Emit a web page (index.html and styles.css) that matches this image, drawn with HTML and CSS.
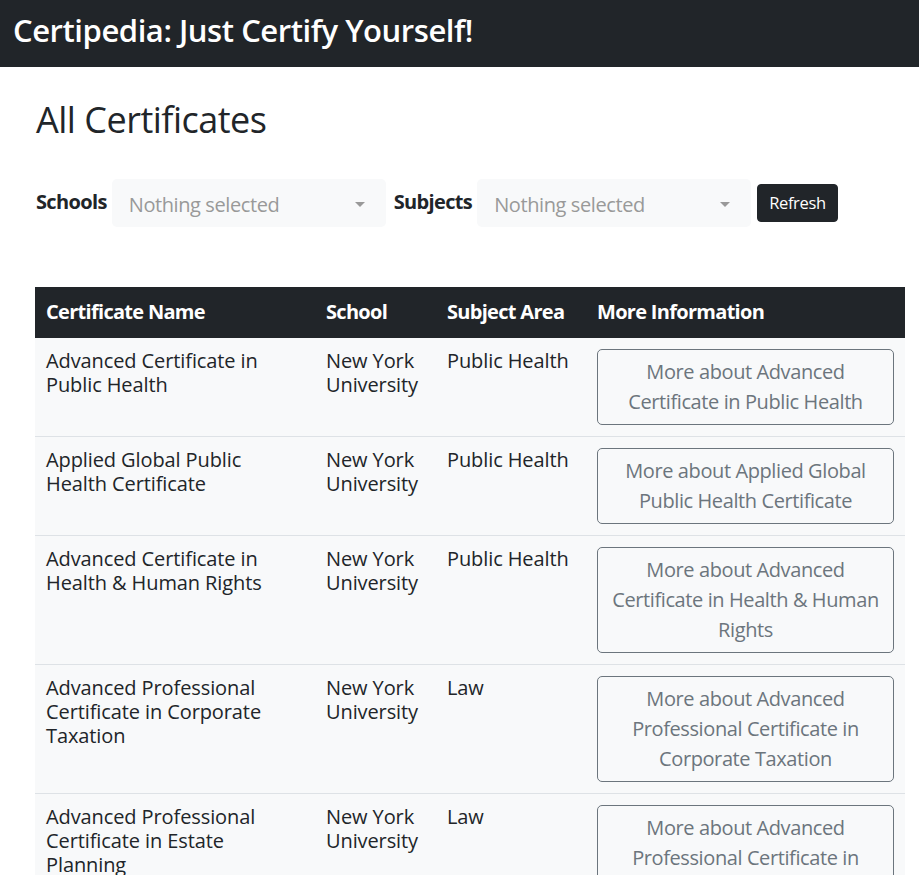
FILE: index.html
```html
<!DOCTYPE html>
<html lang="en">
<head>
<meta charset="utf-8">
<title>Certipedia</title>
<link rel="stylesheet" href="styles.css">
</head>
<body>
<header class="navbar">
  <div class="brand">Certipedia: Just Certify Yourself!</div>
</header>
<main class="page">
  <h1 class="title">All Certificates</h1>
  <div class="filters">
    <label class="filter-label">Schools</label>
    <div class="select"><span class="select-text">Nothing selected</span><span class="caret"></span></div>
    <label class="filter-label">Subjects</label>
    <div class="select"><span class="select-text">Nothing selected</span><span class="caret"></span></div>
    <button class="btn-refresh">Refresh</button>
  </div>
  <table class="certs">
    <colgroup>
      <col class="c-name"><col class="c-school"><col class="c-subject"><col class="c-more">
    </colgroup>
    <thead>
      <tr><th>Certificate Name</th><th>School</th><th>Subject Area</th><th>More Information</th></tr>
    </thead>
    <tbody>
      <tr>
        <td>Advanced Certificate in Public Health</td>
        <td>New York University</td>
        <td>Public Health</td>
        <td><button class="btn-more">More about Advanced Certificate in Public Health</button></td>
      </tr>
      <tr>
        <td>Applied Global Public Health Certificate</td>
        <td>New York University</td>
        <td>Public Health</td>
        <td><button class="btn-more">More about Applied Global Public Health Certificate</button></td>
      </tr>
      <tr>
        <td>Advanced Certificate in Health &amp; Human Rights</td>
        <td>New York University</td>
        <td>Public Health</td>
        <td><button class="btn-more">More about Advanced Certificate in Health &amp; Human Rights</button></td>
      </tr>
      <tr>
        <td>Advanced Professional Certificate in Corporate Taxation</td>
        <td>New York University</td>
        <td>Law</td>
        <td><button class="btn-more">More about Advanced Professional Certificate in Corporate Taxation</button></td>
      </tr>
      <tr>
        <td>Advanced Professional Certificate in Estate Planning</td>
        <td>New York University</td>
        <td>Law</td>
        <td><button class="btn-more">More about Advanced Professional Certificate in Estate Planning</button></td>
      </tr>
    </tbody>
  </table>
</main>
</body>
</html>
```
FILE: styles.css
```css
* { box-sizing: border-box; }
html, body { margin: 0; padding: 0; }
body {
  font-family: "Open Sans", "Noto Sans", "Liberation Sans", sans-serif;
  color: #212529;
  background: #fff;
  font-size: 16px;
}
.navbar {
  background: #212529;
  height: 67px;
  display: flex;
  align-items: center;
  padding: 0 13px;
}
.brand {
  color: #fff;
  font-size: 31px;
  font-weight: 600;
  letter-spacing: -0.45px;
  line-height: 1.2;
  margin-top: -6px;
}
.page {
  padding: 0 14px 40px 35px;
}
.title {
  margin: 31px 0 0 1px;
  font-size: 36px;
  font-weight: 500;
  letter-spacing: -0.5px;
  line-height: 1.2;
}
.filters {
  display: flex;
  align-items: center;
  margin-top: 38px;
  height: 48px;
}
.filter-label {
  font-size: 20px;
  font-weight: 700;
  letter-spacing: -0.65px;
  margin: 0 5px 4px 1px;
}
.select {
  width: 274px;
  height: 48px;
  background: #f8f9fa;
  border-radius: 5px;
  display: flex;
  align-items: center;
  justify-content: space-between;
  padding: 2px 16px 0 17px;
  margin-right: 7px;
}
.select-text {
  font-size: 20px;
  color: #999;
  letter-spacing: -0.4px;
}
.caret {
  width: 0;
  height: 0;
  border-top: 5px solid #999;
  border-left: 5px solid transparent;
  border-right: 5px solid transparent;
  margin-right: 5px;
}
.btn-refresh {
  font-family: inherit;
  background: #212529;
  color: #fff;
  border: 1px solid #212529;
  border-radius: 4px;
  font-size: 16.5px;
  letter-spacing: -0.35px;
  line-height: 24px;
  padding: 6px 11px;
  margin-left: -1px;
}
.certs {
  margin-top: 60px;
  width: 870px;
  border-collapse: collapse;
  table-layout: fixed;
}
.c-name { width: 280px; }
.c-school { width: 121px; }
.c-subject { width: 150px; }
.c-more { width: 319px; }
.certs th {
  background: #212529;
  color: #fff;
  font-size: 20px;
  font-weight: 700;
  letter-spacing: -0.7px;
  line-height: 24px;
  text-align: left;
  padding: 13px 11px 14px;
}
.certs td {
  background: #f8f9fa;
  border-top: 1px solid #dee2e6;
  vertical-align: top;
  font-size: 20px;
  font-weight: 500;
  letter-spacing: -0.1px;
  line-height: 24px;
  padding: 11px;
}
.certs tbody tr:first-child td { border-top: 0; }
.btn-more {
  display: block;
  width: 100%;
  font-family: inherit;
  background: transparent;
  color: #6c757d;
  border: 1px solid #6c757d;
  border-radius: 5px;
  font-size: 20px;
  letter-spacing: -0.4px;
  line-height: 30px;
  padding: 7px 12px;
  text-align: center;
}
```
